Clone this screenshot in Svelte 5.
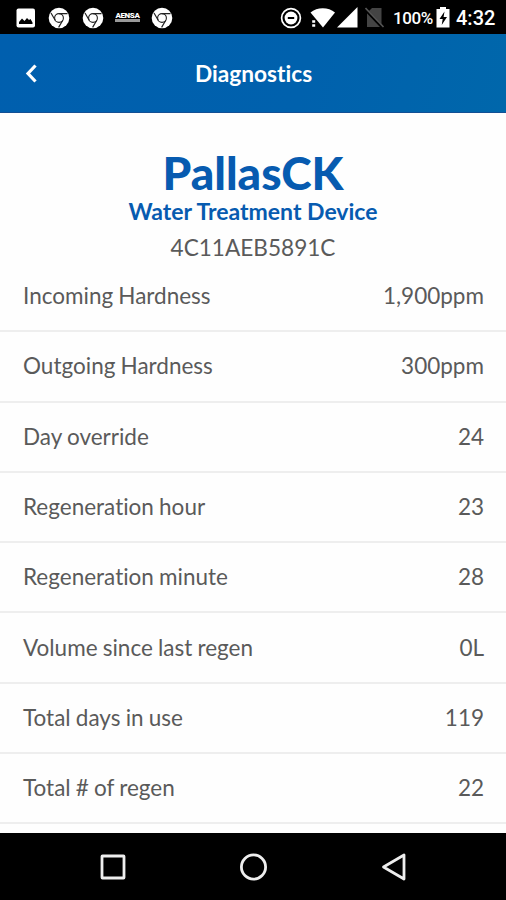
<script>
  const rows = [
    { label: 'Incoming Hardness', value: '1,900ppm' },
    { label: 'Outgoing Hardness', value: '300ppm' },
    { label: 'Day override', value: '24' },
    { label: 'Regeneration hour', value: '23' },
    { label: 'Regeneration minute', value: '28' },
    { label: 'Volume since last regen', value: '0L' },
    { label: 'Total days in use', value: '119' },
    { label: 'Total # of regen', value: '22' }
  ];
</script>

{#snippet chrome()}
  <svg class="chrome" width="22" height="22" viewBox="0 0 22 22">
    <circle cx="11" cy="11" r="10.3" fill="#fff" />
    <circle cx="11" cy="11" r="4.4" fill="#fff" stroke="#222" stroke-width="1.1" />
    <path d="M11 6.600h8.500M7.200 13.200L3 6M14.800 13.200l-4.200 7.200" stroke="#222" stroke-width="1.200" fill="none" />
  </svg>
{/snippet}

<div class="screen">
  <div class="status">
    <div class="left">
      <svg width="20" height="20" viewBox="0 0 20 20">
        <rect x="0.5" y="0.5" width="18.5" height="19" rx="2" fill="#fff" />
        <path d="M3 16v-2l3-3.500 2.500 2.500 2.500-3 2 2 1.500-1 2 3.500v1.500z" fill="#000" />
      </svg>
      {@render chrome()}
      {@render chrome()}
      <div class="brand"><b>AENSA</b><i></i></div>
      {@render chrome()}
    </div>
    <div class="right">
      <svg class="dnd" width="22" height="22" viewBox="0 0 22 22">
        <circle cx="11" cy="11" r="9.4" fill="none" stroke="#fff" stroke-width="1.7" />
        <circle cx="11" cy="11" r="6.4" fill="#fff" />
        <path d="M7.8 11h6.4" stroke="#000" stroke-width="2" />
      </svg>
      <svg class="wifi" width="26" height="22" viewBox="0 0 26 22">
        <path d="M0.500 5.500C7-.2 18.500-.2 25 5.500L13 20.500z" fill="#fff" />
        <path d="M0 13h7v8H0z" fill="#000" />
        <path d="M2.200 14.500h3M2.200 18.500h3" stroke="#fff" stroke-width="2.300" />
      </svg>
      <svg class="signal" width="21" height="21" viewBox="0 0 21 21"><path d="M20.500 0v20.500H0z" fill="#fff" /></svg>
      <svg class="nosim" width="20" height="21" viewBox="0 0 20 21">
        <path d="M7 1h9.500v19H2V6z" fill="#444" />
        <path d="M0 2l18 19" stroke="#000" stroke-width="3" />
        <path d="M0.500 1l18 19" stroke="#555" stroke-width="1.600" />
      </svg>
      <span class="pct">100%</span>
      <svg class="battery" width="14" height="21" viewBox="0 0 14 21">
        <path d="M4 0h6v2h3.500v18.500H0.500V2H4z" fill="#fff" />
        <path d="M8.500 4.500L3.500 12h3.200l-1 6L11 10H7.600z" fill="#000" />
      </svg>
      <span class="time">4:32</span>
    </div>
  </div>
  <header>
    <svg width="14" height="20" viewBox="0 0 14 20"><path d="M11.500 2.500L4 10.500l7.500 8" fill="none" stroke="#fff" stroke-width="3.200" /></svg>
    <h1>Diagnostics</h1>
  </header>
  <main>
    <section>
      <h2>PallasCK</h2>
      <h3>Water Treatment Device</h3>
      <p>4C11AEB5891C</p>
    </section>
    <ul>
      {#each rows as row}
        <li><span>{row.label}</span><span>{row.value}</span></li>
      {/each}
    </ul>
  </main>
  <nav>
    <svg width="28" height="28" viewBox="0 0 28 28"><rect x="3" y="3" width="22" height="22" rx=".5" /></svg>
    <svg width="28" height="28" viewBox="0 0 28 28"><circle cx="13.500" cy="14" r="12.100" /></svg>
    <svg width="28" height="28" viewBox="0 0 28 28"><path d="M24 2v24L3.500 14z" stroke-linejoin="round" /></svg>
  </nav>
</div>

<style>
  :global(body) { margin: 0; }
  .screen {
    width: 506px;
    height: 900px;
    display: flex;
    flex-direction: column;
    overflow: hidden;
    background: #fefefe;
    font-family: Lato, sans-serif;
    font-variant-ligatures: none;
    color: #5a5a5a;
  }
  .status {
    flex: 0 0 34px;
    display: flex;
    justify-content: space-between;
    background: #000;
    color: #fff;
    font-family: Roboto, sans-serif;
  }
  .left, .right { display: flex; align-items: center; height: 34px; box-sizing: border-box; padding-top: 1px; }
  .left { padding-left: 16px; }
  .chrome { margin-left: 12px; }
  .brand {
    width: 25px;
    margin: 0 0 0 11px;
    display: flex;
    flex-direction: column;
    align-items: center;
  }
  .brand + .chrome { margin-left: 11px; }
  .brand b { font-size: 8px; line-height: 6px; font-weight: 900; letter-spacing: -.4px; }
  .brand i { width: 25px; height: 3px; background: #999; }
  .right { width: 226px; }
  .wifi { margin-left: 8px; }
  .signal { margin-left: 1px; }
  .nosim { margin-left: 7px; }
  .pct { margin-left: 8px; width: 42px; font-size: 17px; letter-spacing: -.4px; font-weight: 500; white-space: nowrap; }
  .battery { margin-left: 1px; }
  .time { margin-left: 6px; font-size: 20px; font-weight: 500; }
  header {
    flex: 0 0 79px;
    box-sizing: border-box;
    display: flex;
    align-items: center;
    padding: 0 24px;
    border-bottom: 1px solid #134f94;
    background: linear-gradient(105deg, #005fae, #0061ad 60%, #0067ab);
    color: #fff;
  }
  header svg { flex: none; }
  h1 { flex: 1; margin: 2px 13px 0 0; font-size: 22.700px; line-height: 28px; font-weight: 700; text-align: center; }
  main { flex: 0 0 720px; overflow: hidden; }
  section { height: 149px; box-sizing: border-box; padding-top: 33px; text-align: center; }
  h2, h3 { margin: 0; color: #075bb0; }
  h2 { font-size: 46px; line-height: 54px; font-weight: 900; }
  h3 { margin-top: -1px; font-size: 23px; line-height: 24px; font-weight: 700; }
  p { margin: 11px 0 0; font-size: 22.600px; line-height: 28px; }
  ul { list-style: none; margin: 0; padding: 0; }
  li {
    height: 70.300px;
    box-sizing: border-box;
    display: flex;
    align-items: center;
    justify-content: space-between;
    padding: 0 22px 0 23px;
    border-bottom: 2px solid #eee;
    font-size: 22.500px;
    line-height: 28px;
    word-spacing: -.6px;
  }
  nav {
    flex: 1;
    display: flex;
    align-items: center;
    justify-content: space-between;
    padding: 0 98px 0 99px;
    background: #000;
  }
  nav svg { fill: none; stroke: #eee; stroke-width: 2.800; }
</style>
